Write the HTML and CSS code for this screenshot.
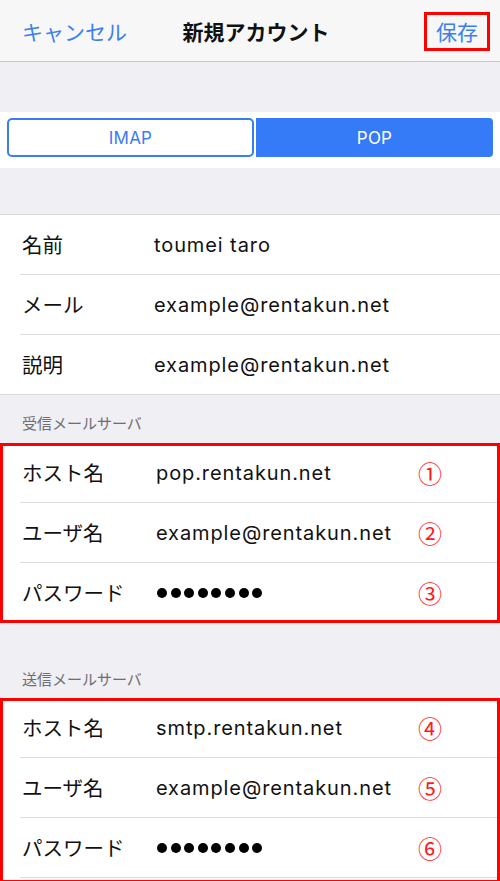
FILE: index.html
```html
<!DOCTYPE html>
<html lang="ja">
<head>
<meta charset="utf-8">
<title>新規アカウント</title>
<link rel="stylesheet" href="styles.css">
</head>
<body>
<div class="screen">
  <header class="nav">
    <span class="nav-cancel">キャンセル</span>
    <span class="nav-title">新規アカウント</span>
    <span class="nav-save-wrap"><span class="nav-save">保存</span></span>
  </header>

  <div class="spacer spacer-top"></div>

  <div class="seg-band">
    <div class="seg">
      <div class="seg-item seg-off">IMAP</div>
      <div class="seg-item seg-on">POP</div>
    </div>
  </div>

  <div class="spacer spacer-mid"></div>

  <section class="group">
    <div class="row"><span class="label">名前</span><span class="value">toumei taro</span></div>
    <div class="row"><span class="label">メール</span><span class="value">example@rentakun.net</span></div>
    <div class="row row-last"><span class="label">説明</span><span class="value">example@rentakun.net</span></div>
  </section>

  <div class="section-head head-in">受信メールサーバ</div>

  <section class="group group-marked group-in">
    <div class="row row-box"><span class="label">ホスト名</span><span class="value">pop.rentakun.net</span><span class="num">①</span></div>
    <div class="row row-box"><span class="label">ユーザ名</span><span class="value">example@rentakun.net</span><span class="num">②</span></div>
    <div class="row row-box row-last"><span class="label">パスワード</span><span class="value dots"><i></i><i></i><i></i><i></i><i></i><i></i><i></i><i></i></span><span class="num">③</span></div>
  </section>

  <div class="section-head head-out">送信メールサーバ</div>

  <section class="group group-marked group-out">
    <div class="row row-box"><span class="label">ホスト名</span><span class="value">smtp.rentakun.net</span><span class="num">④</span></div>
    <div class="row row-box"><span class="label">ユーザ名</span><span class="value">example@rentakun.net</span><span class="num">⑤</span></div>
    <div class="row row-box"><span class="label">パスワード</span><span class="value dots"><i></i><i></i><i></i><i></i><i></i><i></i><i></i><i></i></span><span class="num">⑥</span></div>
  </section>
</div>
</body>
</html>
```

FILE: styles.css
```css
* { box-sizing: border-box; }
html, body { margin: 0; padding: 0; }
body {
  background: #efeff4;
  font-family: "Noto Sans CJK JP", "Noto Sans", sans-serif;
  color: #000;
  width: 500px;
  height: 881px;
  overflow: hidden;
}
.screen { width: 500px; }

.nav {
  height: 62px;
  background: #f7f7f8;
  border-bottom: 1px solid #c8c7cc;
  display: grid;
  grid-template-columns: 1fr auto 1fr;
  align-items: center;
  padding: 0 10px 0 22px;
  font-size: 21px;
  line-height: 1;
}
.nav-cancel { color: #3c80ee; justify-self: start; padding-top: 2px; }
.nav-title { font-weight: 700; color: #111; padding-top: 2px; }
.nav-save-wrap { justify-self: end; }
.nav-save {
  display: block;
  color: #3c80ee;
  border: 3px solid #ff0000;
  width: 66px;
  height: 39px;
  line-height: 33px;
  text-align: center;
  margin-top: 1px;
}

.spacer-top { height: 50px; }
.spacer-mid { height: 46px; }

.seg-band {
  background: #fff;
  height: 56px;
  padding: 6px 7px 0 7px;
}
.seg {
  display: grid;
  grid-template-columns: 247px 1fr;
  gap: 2px;
  height: 39px;
}
.seg-item {
  display: flex;
  align-items: center;
  justify-content: center;
  font-family: "Inter", "Liberation Sans", sans-serif;
  font-size: 17px;
  letter-spacing: 0.2px;
}
.seg-off {
  background: #fff;
  color: #3a7cf2;
  border: 2px solid #3a7cf2;
  border-radius: 5px;
}
.seg-on {
  background: #357af6;
  color: #fff;
  border-radius: 0 4px 4px 0;
}

.group {
  background: #fff;
  border-top: 1px solid #dadade;
  border-bottom: 1px solid #dadade;
}
.row {
  height: 60px;
  display: grid;
  grid-template-columns: 132px 1fr;
  align-items: center;
  margin-left: 20px;
  border-bottom: 1px solid #dcdce0;
}
.row-last { border-bottom: none; height: 59px; }
.row-box { grid-template-columns: 134px 1fr 82px; }
.label {
  font-size: 20.5px;
  padding-left: 2px;
  padding-bottom: 2px;
  color: #111;
}
.value {
  font-family: "Inter", "Liberation Sans", sans-serif;
  font-size: 20px;
  letter-spacing: 0.9px;
  padding-left: 2px;
  color: #111;
}
.num {
  font-family: "Noto Sans CJK JP", sans-serif;
  color: #ff1a1a;
  font-size: 24px;
  line-height: 1;
}

.dots { display: flex; gap: 3.6px; padding-left: 3px; }
.dots i {
  display: block;
  width: 10px;
  height: 10px;
  border-radius: 50%;
  background: #000;
}

.section-head {
  font-size: 15px;
  color: #6d6d72;
  padding-left: 22px;
  display: flex;
  align-items: flex-end;
  line-height: 20px;
}
.head-in { height: 48px; padding-bottom: 10px; }
.head-out { height: 75px; padding-bottom: 9px; }

.group-marked {
  outline: 3px solid #ff0000;
  outline-offset: -3px;
  border-top: none;
}
.group-in { padding-top: 0; }
.group-out { padding-bottom: 4px; }
```
